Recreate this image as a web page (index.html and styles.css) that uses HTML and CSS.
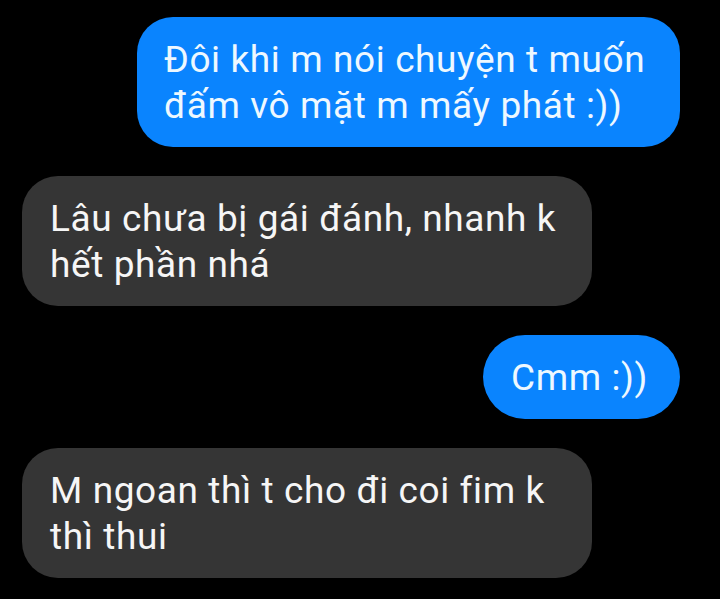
FILE: index.html
```html
<!DOCTYPE html>
<html lang="vi">
<head>
<meta charset="utf-8">
<title>Chat</title>
<link rel="stylesheet" href="styles.css">
</head>
<body>
<div class="chat">
  <div class="bubble out b1">Đôi khi m nói chuyện t muốn<br>đấm vô mặt m mấy phát :))</div>
  <div class="bubble in">Lâu chưa bị gái đánh, nhanh k<br>hết phần nhá</div>
  <div class="bubble out pill b3">Cmm :))</div>
  <div class="bubble in">M ngoan thì t cho đi coi fim k<br>thì thui</div>
</div>
</body>
</html>
```

FILE: styles.css
```css
html, body {
  margin: 0;
  padding: 0;
  background: #000;
}

.chat {
  display: flex;
  flex-direction: column;
  gap: 29px;
  padding: 17px 40px 0 22px;
  font-family: Roboto, "Noto Sans", sans-serif;
}

.bubble {
  box-sizing: border-box;
  font-size: 37px;
  letter-spacing: 0.6px;
  line-height: 46px;
  padding: 20px 28px 18px;
  border-radius: 36px;
  white-space: nowrap;
}

.out {
  align-self: flex-end;
  background: #0a84fe;
  color: #eef8ff;
}

.in {
  align-self: flex-start;
  background: #353535;
  color: #f6f6f6;
  width: 570px;
  padding-left: 28px;
}

.b1 {
  width: 543px;
  padding-left: 27px;
}

.b3 {
  width: 197px;
  padding-left: 28px;
}

.pill {
  border-radius: 43px;
}
```
